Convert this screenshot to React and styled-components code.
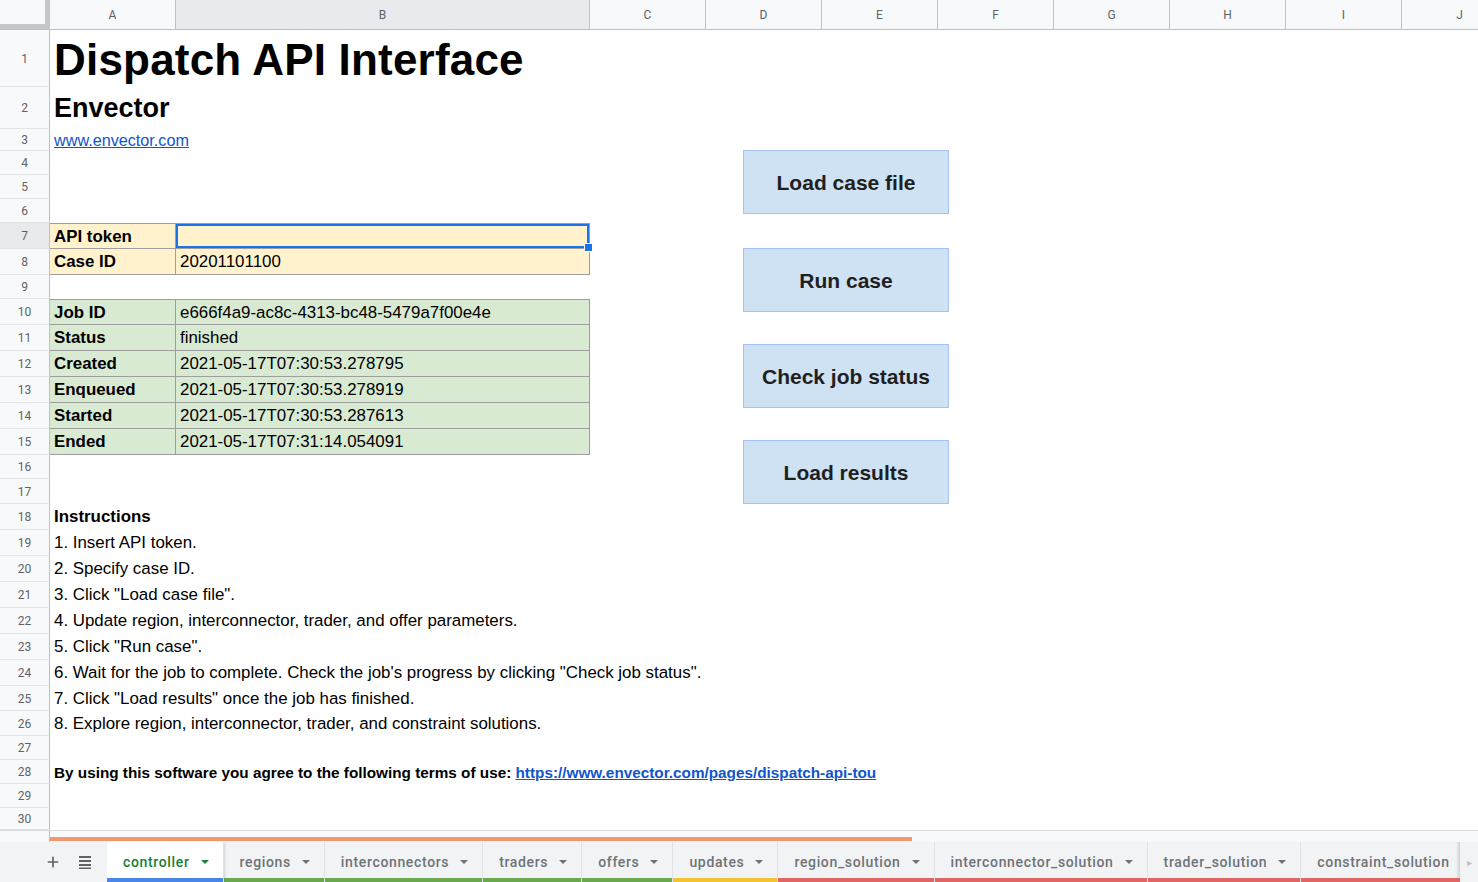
import styled, { createGlobalStyle, css } from "styled-components";
import { Plus } from "lucide-react";

const GlobalStyle = createGlobalStyle`
  html, body {
    margin: 0;
    padding: 0;
    background: #fff;
    overflow: hidden;
  }
  * { box-sizing: border-box; }
`;

const COLS = [
  ["A", 126], ["B", 414], ["C", 116], ["D", 116], ["E", 116],
  ["F", 116], ["G", 116], ["H", 116], ["I", 116], ["J", 116],
];

const ROW_HEIGHTS = [
  57, 42, 22, 24, 24, 24, 26, 26, 24, 26, 26, 26, 26, 26, 26,
  24, 25, 26, 26, 26, 26, 26, 26, 26, 25, 25, 24, 24, 24, 22,
];

const FILLS = {
  yellow: "#fff2cc",
  green: "#d9ead3",
};

const TABS = [
  { name: "controller", color: "#4a86e8", active: true },
  { name: "regions", color: "#6aa84f" },
  { name: "interconnectors", color: "#6aa84f" },
  { name: "traders", color: "#6aa84f" },
  { name: "offers", color: "#6aa84f" },
  { name: "updates", color: "#f1c232" },
  { name: "region_solution", color: "#e06666" },
  { name: "interconnector_solution", color: "#e06666" },
  { name: "trader_solution", color: "#e06666" },
  { name: "constraint_solution", color: "#e06666" },
];

const Page = styled.div`
  width: 100vw;
  height: 100vh;
  display: flex;
  flex-direction: column;
  overflow: hidden;
  font-family: "Liberation Sans", Arial, sans-serif;
`;

const HeaderRow = styled.div`
  display: flex;
  height: 30px;
  flex-shrink: 0;
  border-bottom: 1px solid #c0c0c0;
  background: #f8f9fa;
`;

const Corner = styled.div`
  width: 50px;
  flex-shrink: 0;
  background: #f8f9fa;
  border-right: 5px solid #c4c7c5;
  border-bottom: 5px solid #c4c7c5;
`;

const ColHead = styled.div`
  width: ${(p) => p.$w}px;
  flex-shrink: 0;
  display: flex;
  align-items: center;
  justify-content: center;
  border-right: 1px solid #c0c0c0;
  background: ${(p) => (p.$active ? "#e8eaed" : "#f8f9fa")};
  color: #5f6368;
  font-family: Roboto, "Liberation Sans", sans-serif;
  font-size: 12px;
`;

const Sheet = styled.div`
  position: relative;
  flex: 1;
  overflow: hidden;
`;

const Row = styled.div`
  display: grid;
  grid-template-columns: 50px 126px 414px 1fr;
  height: ${(p) => p.$h}px;
`;

const RowHead = styled.div`
  display: flex;
  align-items: center;
  justify-content: center;
  background: ${(p) => (p.$active ? "#e8eaed" : "#f8f9fa")};
  border-right: 1px solid #c0c0c0;
  border-bottom: 1px solid #e2e3e3;
  color: #5f6368;
  font-family: Roboto, "Liberation Sans", sans-serif;
  font-size: 12px;
  padding-top: 1px;
`;

const Cell = styled.div`
  position: relative;
  display: flex;
  align-items: center;
  padding: 0 4px;
  white-space: nowrap;
  overflow: visible;
  min-width: 0;
  font-size: 16.9px;
  color: #000;
  font-weight: ${(p) => (p.$bold ? 700 : 400)};
  z-index: ${(p) => (p.$selected ? 2 : 1)};
  ${(p) =>
    p.$fill &&
    css`
      background: ${FILLS[p.$fill]};
      border-right: 1px solid #9e9e9e;
      border-bottom: 1px solid #9e9e9e;
      padding-top: 1px;
    `}
  ${(p) =>
    p.$top &&
    css`
      border-top: 1px solid #9e9e9e;
    `}
  ${(p) =>
    p.$selected &&
    css`
      box-shadow: inset 0 0 0 2px #1a73e8;
      &::after {
        content: "";
        position: absolute;
        right: -4px;
        bottom: -4px;
        width: 7px;
        height: 7px;
        background: #1a73e8;
        border: 1px solid #fff;
      }
    `}
`;

const Title = styled.span`
  font-family: "Liberation Sans", Arial, sans-serif;
  font-weight: 700;
  font-size: 44px;
  letter-spacing: 0.2px;
  line-height: 1;
  color: #000;
  padding-top: 2px;
`;

const Subtitle = styled.span`
  font-weight: 700;
  font-size: 27px;
  line-height: 1;
`;

const SiteLink = styled.a`
  font-size: 16.2px;
  color: #1155cc;
  text-decoration: underline;
`;

const Terms = styled.span`
  font-family: "Liberation Sans", Arial, sans-serif;
  font-weight: 700;
  font-size: 15.3px;
  padding-top: 2px;

  a {
    color: #1155cc;
    text-decoration: underline;
  }
`;

const ActionButton = styled.div`
  position: absolute;
  left: 743px;
  top: ${(p) => p.$top}px;
  width: 206px;
  height: 64px;
  display: flex;
  align-items: center;
  justify-content: center;
  padding-top: 2px;
  background: #cfe2f3;
  border: 1px solid #a4c2f4;
  font-weight: 700;
  font-size: 21px;
  color: #1f1f1f;
  z-index: 3;
`;

const ScrollStrip = styled.div`
  height: 12px;
  flex-shrink: 0;
  display: flex;
  background: #f8f9fa;
  border-top: 1px solid #dadce0;
`;

const ScrollGutter = styled.div`
  width: 50px;
  border-right: 1px solid #c0c0c0;
`;

const ScrollThumb = styled.div`
  width: 862px;
  height: 4px;
  margin-top: 6px;
  background: #f4956e;
`;

const TabBar = styled.div`
  height: 40px;
  flex-shrink: 0;
  display: flex;
  background: #f1f3f4;
  font-family: Roboto, "Liberation Sans", sans-serif;
`;

const TabTools = styled.div`
  width: 107px;
  flex-shrink: 0;
  display: flex;
  align-items: center;
  padding-left: 45px;
  gap: 17px;
  color: #5f6368;
`;

const TabStrip = styled.div`
  flex: 1;
  display: flex;
  overflow: hidden;
  box-shadow: inset -4px 0 3px -2px rgba(0, 0, 0, 0.15);
`;

const Tab = styled.div`
  position: relative;
  flex-shrink: 0;
  display: flex;
  align-items: center;
  gap: 11px;
  padding: 0 14px 0 16px;
  font-size: 14px;
  font-weight: 500;
  letter-spacing: 0.65px;
  color: ${(p) => (p.$active ? "#188038" : "#6f7378")};
  background: ${(p) => (p.$active ? "#fff" : "transparent")};
  border-right: 1px solid #e0e2e4;
  box-shadow: ${(p) =>
    p.$active ? "0 1px 3px rgba(60, 64, 67, 0.3)" : "none"};
  z-index: ${(p) => (p.$active ? 1 : 0)};

  &::after {
    content: "";
    position: absolute;
    left: 0;
    right: 0;
    bottom: 0;
    height: 4px;
    background: ${(p) => p.$color};
  }
`;

const NavArea = styled.div`
  width: 18px;
  flex-shrink: 0;
  display: flex;
  align-items: center;
  justify-content: center;
  color: #bdc1c6;
  font-size: 10px;
`;

function Caret() {
  return (
    <svg width="8" height="4" viewBox="0 0 8 4">
      <path d="M0 0h8L4 4z" fill="currentColor" />
    </svg>
  );
}

function SheetsList() {
  return (
    <svg width="14" height="14" viewBox="0 0 14 14">
      <rect x="1" y="1" width="12" height="2" fill="currentColor" />
      <rect x="1" y="5" width="12" height="2" fill="currentColor" />
      <rect x="1" y="9" width="12" height="2" fill="currentColor" />
      <rect x="1" y="12.5" width="12" height="1.5" fill="currentColor" />
    </svg>
  );
}

const STATUS = [
  ["Job ID", "e666f4a9-ac8c-4313-bc48-5479a7f00e4e"],
  ["Status", "finished"],
  ["Created", "2021-05-17T07:30:53.278795"],
  ["Enqueued", "2021-05-17T07:30:53.278919"],
  ["Started", "2021-05-17T07:30:53.287613"],
  ["Ended", "2021-05-17T07:31:14.054091"],
];

const STEPS = [
  "1. Insert API token.",
  "2. Specify case ID.",
  '3. Click "Load case file".',
  "4. Update region, interconnector, trader, and offer parameters.",
  '5. Click "Run case".',
  '6. Wait for the job to complete. Check the job\'s progress by clicking "Check job status".',
  '7. Click "Load results" once the job has finished.',
  "8. Explore region, interconnector, trader, and constraint solutions.",
];

function buildRows() {
  const rows = {};
  rows[1] = [<Title>Dispatch API Interface</Title>];
  rows[2] = [<Subtitle>Envector</Subtitle>];
  rows[3] = [<SiteLink href="#">www.envector.com</SiteLink>];
  rows[7] = { fill: "yellow", top: true, a: "API token", b: "", selected: true };
  rows[8] = { fill: "yellow", a: "Case ID", b: "20201101100" };
  STATUS.forEach(([a, b], i) => {
    rows[10 + i] = { fill: "green", top: i === 0, a, b };
  });
  rows[18] = { bold: true, text: "Instructions" };
  STEPS.forEach((s, i) => {
    rows[19 + i] = { text: s };
  });
  rows[28] = [
    <Terms>
      By using this software you agree to the following terms of use:{" "}
      <a href="#">https://www.envector.com/pages/dispatch-api-tou</a>
    </Terms>,
  ];
  return rows;
}

export default function App() {
  const rows = buildRows();

  return (
    <Page>
      <GlobalStyle />
      <HeaderRow>
        <Corner />
        {COLS.map(([name, w]) => (
          <ColHead key={name} $w={w} $active={name === "B"}>
            {name}
          </ColHead>
        ))}
      </HeaderRow>

      <Sheet>
        {ROW_HEIGHTS.map((h, i) => {
          const n = i + 1;
          const r = rows[n];
          let a = null;
          let b = null;
          if (Array.isArray(r)) {
            a = <Cell>{r[0]}</Cell>;
            b = <Cell />;
          } else if (r && r.fill) {
            a = (
              <Cell $fill={r.fill} $top={r.top} $bold>
                {r.a}
              </Cell>
            );
            b = (
              <Cell $fill={r.fill} $top={r.top} $selected={r.selected}>
                {r.b}
              </Cell>
            );
          } else if (r) {
            a = <Cell $bold={r.bold}>{r.text}</Cell>;
            b = <Cell />;
          } else {
            a = <Cell />;
            b = <Cell />;
          }
          return (
            <Row key={n} $h={h}>
              <RowHead $active={n === 7}>{n}</RowHead>
              {a}
              {b}
              <Cell />
            </Row>
          );
        })}

        <ActionButton $top={120}>Load case file</ActionButton>
        <ActionButton $top={218}>Run case</ActionButton>
        <ActionButton $top={314}>Check job status</ActionButton>
        <ActionButton $top={410}>Load results</ActionButton>
      </Sheet>

      <ScrollStrip>
        <ScrollGutter />
        <ScrollThumb />
      </ScrollStrip>

      <TabBar>
        <TabTools>
          <Plus size={16} strokeWidth={2.5} />
          <SheetsList />
        </TabTools>
        <TabStrip>
          {TABS.map((t) => (
            <Tab key={t.name} $active={t.active} $color={t.color}>
              {t.name}
              <Caret />
            </Tab>
          ))}
        </TabStrip>
        <NavArea>▸</NavArea>
      </TabBar>
    </Page>
  );
}
